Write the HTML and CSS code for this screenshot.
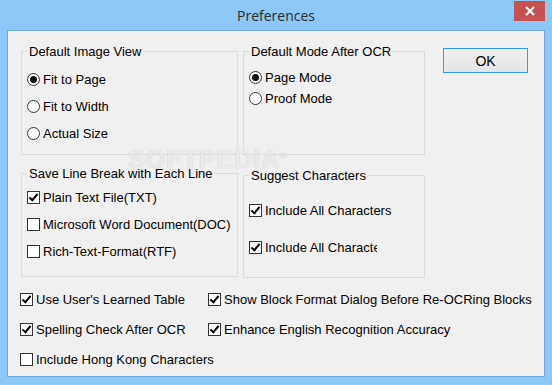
FILE: index.html
```html
<!DOCTYPE html>
<html lang="en">
    <head>
        <meta charset="UTF-8">
        <title>Preferences</title>
        <link rel="stylesheet" href="styles.css">
    </head>
    <body>
    <div class="window">
        <div class="titlebar">
            <div class="title">Preferences</div>
            <div class="close">
                <svg width="10" height="10" viewBox="0 0 10 10"><path d="M1 1 L9 9 M9 1 L1 9" stroke="#fff" stroke-width="2"/></svg>
            </div>
        </div>
        <div class="client">
            <div class="groups">
                <fieldset class="group spaced">
                    <legend>Default Image View</legend>
                    <label class="opt"><span class="radio on"></span>Fit to Page</label>
                    <label class="opt"><span class="radio"></span>Fit to Width</label>
                    <label class="opt"><span class="radio"></span>Actual Size</label>
                </fieldset>
                <fieldset class="group tight">
                    <legend>Default Mode After OCR</legend>
                    <label class="opt"><span class="radio on"></span>Page Mode</label>
                    <label class="opt"><span class="radio"></span>Proof Mode</label>
                </fieldset>
                <div class="actions">
                    <button class="ok">OK</button>
                </div>
                <fieldset class="group lines">
                    <legend>Save Line Break with Each Line</legend>
                    <label class="opt"><span class="check on"></span>Plain Text File(TXT)</label>
                    <label class="opt"><span class="check"></span>Microsoft Word Document(DOC)</label>
                    <label class="opt"><span class="check"></span>Rich-Text-Format(RTF)</label>
                </fieldset>
                <fieldset class="group suggest">
                    <legend>Suggest Characters</legend>
                    <label class="opt"><span class="check on"></span>Include All Characters</label>
                    <label class="opt"><span class="check on"></span><span class="clip">Include All Characters</span></label>
                </fieldset>
            </div>
            <div class="extras">
                <label class="opt"><span class="check on"></span>Use User's Learned Table</label>
                <label class="opt"><span class="check on"></span>Show Block Format Dialog Before Re-OCRing Blocks</label>
                <label class="opt"><span class="check on"></span>Spelling Check After OCR</label>
                <label class="opt"><span class="check on"></span>Enhance English Recognition Accuracy</label>
                <label class="opt"><span class="check"></span>Include Hong Kong Characters</label>
            </div>
            <div class="watermark">SOFTPEDIA<sup>®</sup></div>
        </div>
    </div>
    </body>
</html>
```

FILE: styles.css
```css
body {
    margin: 0;
    font-family: "Liberation Sans", Arial, sans-serif;
    font-size: 13px;
    color: #000;
}
.window {
    width: 552px;
    height: 385px;
    box-sizing: border-box;
    padding: 0 7px 8px 7px;
    background: #8bc8f8;
    display: flex;
    flex-direction: column;
}
.titlebar {
    height: 30px;
    flex: none;
    display: grid;
    grid-template-columns: 1fr auto 1fr;
    align-items: start;
}
.title {
    grid-column: 2;
    font-family: "Open Sans", "Noto Sans", sans-serif;
    font-size: 14px;
    line-height: 20px;
    padding-top: 6px;
    color: #2b2b2b;
}
.close {
    grid-column: 3;
    justify-self: end;
    margin-top: 1px;
    width: 31px;
    height: 20px;
    background: #c75050;
    display: flex;
    align-items: center;
    justify-content: center;
}
.client {
    flex: 1;
    position: relative;
    background: #f0f0f0;
    border: 1px solid #6ea9de;
    overflow: hidden;
}
.groups {
    display: grid;
    grid-template-columns: 217px 182px auto;
    grid-template-rows: 111px 111px;
    column-gap: 5px;
    row-gap: 11px;
    padding: 13px 0 0 13px;
}
.group {
    margin: 0;
    padding: 0 0 0 5px;
    border: 1px solid #dcdcdc;
    min-width: 0;
    box-sizing: border-box;
    display: flex;
    flex-direction: column;
}
.group legend {
    padding: 0 2px;
    line-height: 15px;
}
.opt {
    display: flex;
    align-items: center;
    white-space: nowrap;
}
.spaced { padding-top: 7px; }
.spaced .opt { height: 27px; }
.tight { padding-top: 8px; }
.tight .opt { height: 21px; }
.lines { padding-top: 3px; }
.lines .opt { height: 27px; }
.suggest {
    margin-top: 2px;
    height: 110px;
    padding-top: 12px;
}
.suggest .opt { height: 30px; margin-bottom: 7px; }
.clip {
    width: 112px;
    overflow: hidden;
}
.actions {
    padding: 4px 0 0 13px;
}
.ok {
    width: 85px;
    height: 25px;
    border: 1px solid #3399ff;
    background: linear-gradient(#f0f0f0, #e5e5e5);
    font-family: "Liberation Sans", Arial, sans-serif;
    font-size: 14px;
    color: #000;
    padding: 0;
}
.radio, .check {
    flex: none;
    width: 13px;
    height: 13px;
    box-sizing: border-box;
    border: 1px solid #333;
    background: #fff;
    margin-right: 3px;
    position: relative;
}
.radio {
    border-radius: 50%;
}
.radio.on::after {
    content: "";
    position: absolute;
    left: 2px;
    top: 2px;
    width: 7px;
    height: 7px;
    border-radius: 50%;
    background: #111;
}
.check.on::after {
    content: "";
    position: absolute;
    left: 3px;
    top: 0px;
    width: 3px;
    height: 7px;
    border: solid #000;
    border-width: 0 2px 2px 0;
    transform: rotate(40deg);
}
.extras {
    display: grid;
    grid-template-columns: 188px auto;
    grid-auto-rows: 30px;
    padding: 7px 0 0 12px;
}
.extras .opt { height: 30px; }
.watermark {
    position: absolute;
    left: 120px;
    top: 112px;
    font-size: 25px;
    line-height: 26px;
    font-weight: bold;
    letter-spacing: 1px;
    color: rgba(255, 255, 255, 0.7);
    text-shadow: 0 0 1px rgba(150, 150, 150, 0.6);
    pointer-events: none;
}
.watermark sup {
    font-size: 9px;
}
```
